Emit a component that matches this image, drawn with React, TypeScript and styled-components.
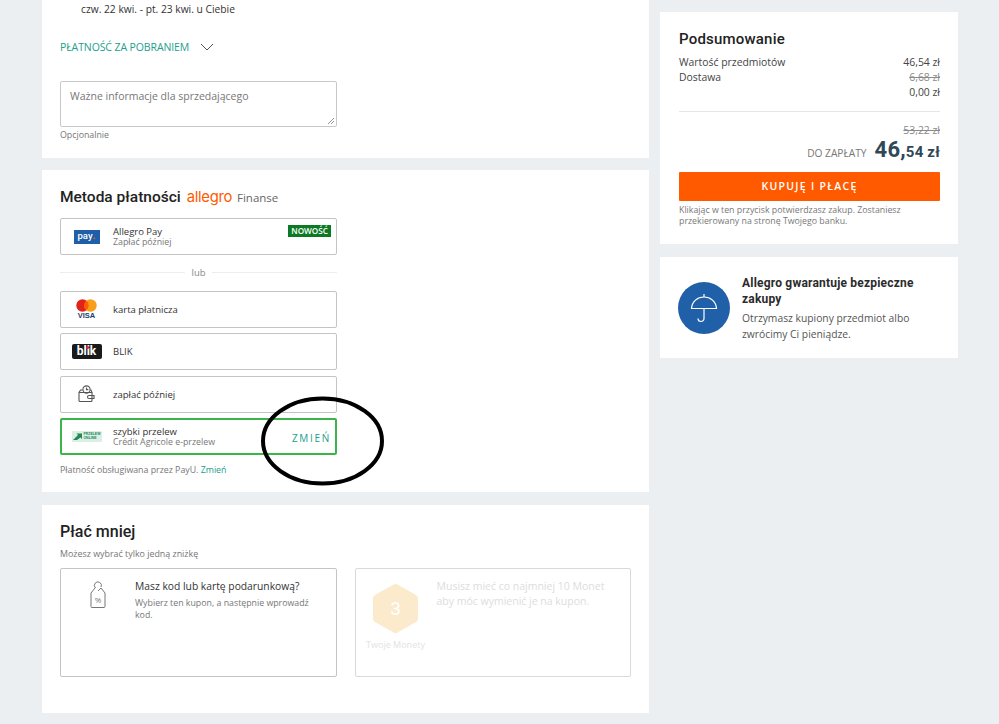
import styled, { createGlobalStyle } from "styled-components";

const GlobalStyle = createGlobalStyle`
    html, body {
        margin: 0;
        padding: 0;
        background: #eceff2;
        font-family: "Open Sans", "Liberation Sans", sans-serif;
        color: #333;
    }
`;

const Page = styled.div`
    position: relative;
    width: 999px;
    height: 724px;
    overflow: hidden;
    display: grid;
    grid-template-columns: 607px 298px;
    column-gap: 11px;
    padding-left: 42px;
    box-sizing: border-box;
    align-items: start;
`;

const Column = styled.div`
    display: flex;
    flex-direction: column;
`;

const RightColumn = styled(Column)`
    padding-top: 12px;
    gap: 13px;
`;

const Card = styled.section<{ $height: number; $gap?: number }>`
    background: #fff;
    box-sizing: border-box;
    height: ${(p) => p.$height}px;
    margin-bottom: ${(p) => p.$gap ?? 0}px;
    padding: 0 18px;
`;

const Delivery = styled.div`
    font-size: 10.25px;
    line-height: 14px;
    padding: 2px 0 0 21px;
    color: #333;
`;

const PayOnDelivery = styled.div`
    display: flex;
    align-items: center;
    gap: 11px;
    margin-top: 24px;
    height: 14px;
    font-size: 10.5px;
    color: #21a08d;
    letter-spacing: -0.1px;
`;

const NoteBox = styled.div`
    position: relative;
    box-sizing: border-box;
    width: 277px;
    height: 46px;
    margin-top: 27px;
    border: 1px solid #c9c9c9;
    border-radius: 2px;
    padding: 7px 9px;
    font-size: 10.5px;
    line-height: 14px;
    color: #777;
`;

const Grip = styled.svg`
    position: absolute;
    right: 1px;
    bottom: 1px;
`;

const Hint = styled.div`
    font-size: 8.8px;
    line-height: 12px;
    margin-top: 2px;
    color: #767676;
`;

const TitleRow = styled.div`
    display: flex;
    align-items: center;
    height: 22px;
    padding-top: 16px;
`;

const Title = styled.h2`
    margin: 0;
    font-family: Roboto, "Liberation Sans", sans-serif;
    font-size: 15.5px;
    font-weight: 500;
    color: #222;
`;

const AllegroWord = styled.span`
    font-family: Inter, "Liberation Sans", sans-serif;
    font-size: 14.8px;
    font-weight: 400;
    letter-spacing: -0.3px;
    color: #ff5a00;
    margin-left: 6px;
`;

const Finanse = styled.span`
    font-size: 11.5px;
    color: #666;
    margin-left: 5px;
`;

const OptionList = styled.div`
    display: flex;
    flex-direction: column;
    width: 277px;
    margin-top: 10px;
`;

const Option = styled.div<{ $selected?: boolean; $gap?: number }>`
    position: relative;
    box-sizing: border-box;
    display: flex;
    align-items: center;
    height: 37px;
    margin-bottom: ${(p) => p.$gap ?? 5.33}px;
    border: ${(p) => (p.$selected ? "2px solid #3ab54a" : "1px solid #c4c4c4")};
    border-radius: 2px;
    padding-left: ${(p) => (p.$selected ? 0 : 1)}px;
`;

const OptionIcon = styled.div`
    width: 49px;
    margin-right: 2px;
    flex: none;
    display: flex;
    justify-content: center;
    align-items: center;
`;

const OptionLines = styled.div`
    padding-top: 1px;
`;

const OptionText = styled.div`
    font-size: 9.5px;
    line-height: 11px;
    color: #333;
`;

const OptionSub = styled.div`
    font-size: 8.8px;
    line-height: 11px;
    color: #777;
`;

const NewBadge = styled.span`
    position: absolute;
    top: 6px;
    right: 5px;
    background: #0b7a22;
    color: #fff;
    font-size: 8.2px;
    font-weight: 600;
    line-height: 12px;
    padding: 0 3px;
`;

const Change = styled.span`
    position: absolute;
    right: 4px;
    top: 11px;
    font-size: 10px;
    line-height: 14px;
    letter-spacing: 1.7px;
    color: #21a08d;
`;

const Divider = styled.div`
    display: flex;
    align-items: center;
    gap: 6px;
    height: 13px;
    margin-bottom: 12px;
    font-size: 9.5px;
    color: #888;

    &::before,
    &::after {
        content: "";
        flex: 1;
        height: 1px;
        background: #eceff2;
    }
`;

const PayBadge = styled.div`
    width: 26px;
    height: 14px;
    background: #1f5ea8;
    color: #fff;
    font-family: Roboto, sans-serif;
    font-size: 9.5px;
    font-weight: 500;
    line-height: 12px;
    text-align: center;
`;

const PayDot = styled.span`
    color: #ff5a00;
    font-weight: 900;
`;

const BlikBadge = styled.div`
    position: relative;
    width: 30px;
    height: 15px;
    background: #1a1a1a;
    border-radius: 2px;
    color: #fff;
    font-family: Roboto, sans-serif;
    font-size: 12px;
    font-weight: 700;
    line-height: 14px;
    text-align: center;
`;

const BlikDot = styled.span`
    position: absolute;
    left: 14px;
    top: 2px;
    width: 3px;
    height: 3px;
    border-radius: 50%;
    background: #e8213a;
`;

const VisaStack = styled.div`
    display: flex;
    flex-direction: column;
    align-items: center;
`;

const VisaText = styled.span`
    font-family: "Liberation Sans", sans-serif;
    font-size: 7.5px;
    font-weight: 700;
    line-height: 8px;
    color: #1a3a6b;
`;

const OnlineBadge = styled.div`
    display: flex;
    align-items: center;
    justify-content: space-between;
    width: 30px;
    height: 11px;
    background: #dcefe6;
    border-radius: 1px;
    padding: 0 1px;
    box-sizing: border-box;
`;

const OnlineText = styled.span`
    color: #1e8a56;
    font-family: "Liberation Sans", sans-serif;
    font-size: 3.5px;
    font-weight: 700;
    line-height: 4px;
`;

const FooterNote = styled.div`
    font-size: 8.8px;
    line-height: 12px;
    margin-top: 9px;
    color: #767676;
`;

const TealLink = styled.span`
    color: #21a08d;
`;

const LessTitle = styled(Title)`
    font-size: 16px;
    line-height: 20px;
    padding-top: 17px;
`;

const LessSub = styled.div`
    font-size: 8.9px;
    line-height: 12px;
    margin-top: 6px;
    color: #767676;
`;

const CouponRow = styled.div`
    display: flex;
    gap: 18px;
    margin-top: 8px;
`;

const Coupon = styled.div<{ $width: number; $muted?: boolean }>`
    box-sizing: border-box;
    width: ${(p) => p.$width}px;
    height: 109px;
    display: flex;
    border: 1px solid ${(p) => (p.$muted ? "#d9d9d9" : "#c4c4c4")};
    border-radius: 2px;
`;

const CouponIcon = styled.div`
    width: 74px;
    flex: none;
    padding: 11px 0 0 0;
    display: flex;
    justify-content: center;
    align-items: flex-start;
    box-sizing: border-box;
`;

const CouponBody = styled.div`
    padding-top: 10px;
    width: 186px;
`;

const CouponTitle = styled.div`
    font-size: 10.3px;
    line-height: 15px;
    color: #333;
`;

const CouponText = styled.div`
    font-size: 8.8px;
    line-height: 11.5px;
    margin-top: 4px;
    color: #777;
`;

const CoinColumn = styled.div`
    width: 80px;
    flex: none;
    display: flex;
    flex-direction: column;
    align-items: center;
    padding-top: 14px;
    box-sizing: border-box;
`;

const Coin = styled.div`
    position: relative;
    width: 47px;
    height: 51px;
    display: flex;
    align-items: center;
    justify-content: center;
    color: #fff;
    font-family: Roboto, sans-serif;
    font-size: 19px;
`;

const CoinShape = styled.svg`
    position: absolute;
    inset: 0;
`;

const CoinDigit = styled.span`
    position: relative;
`;

const CoinLabel = styled.div`
    font-size: 9px;
    line-height: 12px;
    margin-top: 5px;
    color: #e3e3e3;
`;

const MutedText = styled.div`
    font-size: 10.5px;
    line-height: 15px;
    padding: 10px 0 0 1px;
    color: #dddddd;
    width: 180px;
`;

const SideCard = styled.section<{ $height: number }>`
    background: #fff;
    box-sizing: border-box;
    height: ${(p) => p.$height}px;
    padding: 0 18px 0 19px;
`;

const SummaryTitle = styled(Title)`
    font-size: 15px;
    line-height: 20px;
    padding-top: 17px;
    letter-spacing: 0.2px;
`;

const SummaryRows = styled.div`
    margin-top: 6px;
    padding-bottom: 11px;
    border-bottom: 1px solid #e4e6e8;
`;

const SummaryRow = styled.div`
    display: flex;
    justify-content: space-between;
    font-size: 10.4px;
    line-height: 15px;
    color: #444;
`;

const Struck = styled.span`
    text-decoration: line-through;
    color: #8a8a8a;
`;

const OldTotal = styled.div`
    font-size: 10.4px;
    line-height: 14px;
    text-align: right;
    margin-top: 11px;
`;

const TotalRow = styled.div`
    display: flex;
    justify-content: flex-end;
    align-items: baseline;
    gap: 8px;
    height: 24px;
`;

const TotalLabel = styled.span`
    font-size: 10.2px;
    color: #777;
`;

const TotalValue = styled.span`
    font-family: Roboto, sans-serif;
    font-weight: 700;
    font-size: 15px;
    color: #2f4858;
    letter-spacing: 0.2px;
`;

const TotalBig = styled.span`
    font-size: 22px;
`;

const BuyButton = styled.div`
    height: 29px;
    margin-top: 11px;
    background: #ff5a00;
    border-radius: 1px;
    color: #fff;
    font-size: 10.5px;
    font-weight: 600;
    line-height: 29px;
    letter-spacing: 1.3px;
    text-align: center;
`;

const Legal = styled.div`
    font-size: 8.8px;
    line-height: 11px;
    margin-top: 4px;
    color: #777;
`;

const Guarantee = styled.div`
    display: flex;
    gap: 12px;
    padding-top: 18px;
    margin-left: -1px;
`;

const UmbrellaCircle = styled.div`
    width: 52px;
    height: 52px;
    flex: none;
    margin-top: 7px;
    border-radius: 50%;
    background: #1f60a8;
    display: flex;
    align-items: center;
    justify-content: center;
`;

const GuaranteeTitle = styled.div`
    font-family: Roboto, sans-serif;
    font-size: 12px;
    font-weight: 700;
    line-height: 16px;
    color: #2b2b2b;
    letter-spacing: 0.2px;
`;

const GuaranteeText = styled.div`
    font-size: 10.3px;
    line-height: 15.5px;
    margin-top: 4px;
    color: #555;
`;

const Scribble = styled.svg`
    position: absolute;
    left: 258px;
    top: 394px;
`;

function App() {
    return (
        <>
            <GlobalStyle />
            <Page>
                <Column>
                    <Card $height={158} $gap={12}>
                        <Delivery>czw. 22 kwi. - pt. 23 kwi. u Ciebie</Delivery>
                        <PayOnDelivery>
                            PŁATNOŚĆ ZA POBRANIEM
                            <svg width="14" height="8" viewBox="0 0 14 8">
                                <path d="M1 1l6 6 6-6" fill="none" stroke="#555" strokeWidth="1" />
                            </svg>
                        </PayOnDelivery>
                        <NoteBox>
                            Ważne informacje dla sprzedającego
                            <Grip width="8" height="8" viewBox="0 0 8 8">
                                <path d="M1 7l6-6M4 7l3-3" stroke="#777" strokeWidth="0.8" />
                            </Grip>
                        </NoteBox>
                        <Hint>Opcjonalnie</Hint>
                    </Card>

                    <Card $height={322} $gap={13}>
                        <TitleRow>
                            <Title>Metoda płatności</Title>
                            <AllegroWord>allegro</AllegroWord>
                            <Finanse>Finanse</Finanse>
                        </TitleRow>
                        <OptionList>
                            <Option $gap={11}>
                                <OptionIcon>
                                    <PayBadge>pay<PayDot>.</PayDot></PayBadge>
                                </OptionIcon>
                                <OptionLines>
                                    <OptionText>Allegro Pay</OptionText>
                                    <OptionSub>Zapłać później</OptionSub>
                                </OptionLines>
                                <NewBadge>NOWOŚĆ</NewBadge>
                            </Option>
                            <Divider>lub</Divider>
                            <Option>
                                <OptionIcon>
                                    <VisaStack>
                                        <svg width="21" height="13" viewBox="0 0 21 13">
                                            <circle cx="6.5" cy="6.5" r="6.2" fill="#e2231a" />
                                            <circle cx="14.5" cy="6.5" r="6.2" fill="#f79e1b" />
                                            <path d="M10.5 1.8a6.2 6.2 0 0 1 0 9.4a6.2 6.2 0 0 1 0-9.4z" fill="#ff5f00" />
                                        </svg>
                                        <VisaText>VISA</VisaText>
                                    </VisaStack>
                                </OptionIcon>
                                <OptionText>karta płatnicza</OptionText>
                            </Option>
                            <Option>
                                <OptionIcon>
                                    <BlikBadge>
                                        blik
                                        <BlikDot />
                                    </BlikBadge>
                                </OptionIcon>
                                <OptionText>BLIK</OptionText>
                            </Option>
                            <Option>
                                <OptionIcon>
                                    <svg width="17" height="18" viewBox="0 0 17 18" fill="none" stroke="#555" strokeWidth="1.1">
                                        <circle cx="8.5" cy="4.5" r="3.6" />
                                        <path d="M8.5 2.600v2h1.800" />
                                        <path d="M4.800 5H2.600L1 7.500V15.500a1 1 0 0 0 1 1h11a1 1 0 0 0 1-1V7.500H1" />
                                        <path d="M12.200 5H13l1 2.500" />
                                        <path d="M16 10.500h-5a1.500 1.500 0 0 0 0 3h5z" />
                                    </svg>
                                </OptionIcon>
                                <OptionText>zapłać później</OptionText>
                            </Option>
                            <Option $selected $gap={0}>
                                <OptionIcon>
                                    <OnlineBadge>
                                        <svg width="9" height="8" viewBox="0 0 9 8">
                                            <path d="M0 8L5 3 3.500 1.500H9V7L7.500 5.500 4 8z" fill="#1e8a56" />
                                        </svg>
                                        <OnlineText>PRZELEW<br />ONLINE</OnlineText>
                                    </OnlineBadge>
                                </OptionIcon>
                                <OptionLines>
                                    <OptionText>szybki przelew</OptionText>
                                    <OptionSub>Crédit Agricole e-przelew</OptionSub>
                                </OptionLines>
                                <Change>ZMIEŃ</Change>
                            </Option>
                        </OptionList>
                        <FooterNote>
                            Płatność obsługiwana przez PayU. <TealLink>Zmień</TealLink>
                        </FooterNote>
                    </Card>

                    <Card $height={208}>
                        <LessTitle>Płać mniej</LessTitle>
                        <LessSub>Możesz wybrać tylko jedną zniżkę</LessSub>
                        <CouponRow>
                            <Coupon $width={277}>
                                <CouponIcon>
                                    <svg width="16" height="28" viewBox="0 0 16 28" fill="none" stroke="#777" strokeWidth="1">
                                        <path d="M5.500 8A3.500 3.500 0 1 1 11 7" />
                                        <path d="M5 8L1 13v13.500a1 1 0 0 0 1 1h12a1 1 0 0 0 1-1V13l-4-5-3 3" />
                                        <text x="8" y="23" fontSize="8" textAnchor="middle" fill="#777" stroke="none" fontFamily="Open Sans">%</text>
                                    </svg>
                                </CouponIcon>
                                <CouponBody>
                                    <CouponTitle>Masz kod lub kartę podarunkową?</CouponTitle>
                                    <CouponText>Wybierz ten kupon, a następnie wprowadź kod.</CouponText>
                                </CouponBody>
                            </Coupon>
                            <Coupon $width={277} $muted>
                                <CoinColumn>
                                    <Coin>
                                        <CoinShape width="47" height="51" viewBox="0 0 47 51">
                                            <path d="M23.500 5L42 15.500v20L23.500 46 5 35.500v-20z" fill="#fbeacb" stroke="#fbeacb" strokeWidth="8" strokeLinejoin="round" />
                                        </CoinShape>
                                        <CoinDigit>3</CoinDigit>
                                    </Coin>
                                    <CoinLabel>Twoje Monety</CoinLabel>
                                </CoinColumn>
                                <MutedText>Musisz mieć co najmniej 10 Monet aby móc wymienić je na kupon.</MutedText>
                            </Coupon>
                        </CouponRow>
                    </Card>
                </Column>

                <RightColumn>
                    <SideCard $height={232}>
                        <SummaryTitle>Podsumowanie</SummaryTitle>
                        <SummaryRows>
                            <SummaryRow>
                                <span>Wartość przedmiotów</span>
                                <span>46,54 zł</span>
                            </SummaryRow>
                            <SummaryRow>
                                <span>Dostawa</span>
                                <Struck>6,68 zł</Struck>
                            </SummaryRow>
                            <SummaryRow>
                                <span />
                                <span>0,00 zł</span>
                            </SummaryRow>
                        </SummaryRows>
                        <OldTotal>
                            <Struck>53,22 zł</Struck>
                        </OldTotal>
                        <TotalRow>
                            <TotalLabel>DO ZAPŁATY</TotalLabel>
                            <TotalValue>
                                <TotalBig>46,</TotalBig>54 zł
                            </TotalValue>
                        </TotalRow>
                        <BuyButton>KUPUJĘ I PŁACĘ</BuyButton>
                        <Legal>Klikając w ten przycisk potwierdzasz zakup. Zostaniesz przekierowany na stronę Twojego banku.</Legal>
                    </SideCard>

                    <SideCard $height={101}>
                        <Guarantee>
                            <UmbrellaCircle>
                                <svg width="28" height="30" viewBox="0 0 28 30" fill="none" stroke="#fff" strokeWidth="1.2">
                                    <path d="M14 1v3" />
                                    <path d="M1.500 15.500C2 8.500 7.500 4 14 4s12 4.500 12.500 11.500z" />
                                    <path d="M14 15.500v10a3 3 0 0 1-6 0" />
                                </svg>
                            </UmbrellaCircle>
                            <div>
                                <GuaranteeTitle>Allegro gwarantuje bezpieczne zakupy</GuaranteeTitle>
                                <GuaranteeText>Otrzymasz kupiony przedmiot albo zwrócimy Ci pieniądze.</GuaranteeText>
                            </div>
                        </Guarantee>
                    </SideCard>
                </RightColumn>

                <Scribble width="130" height="94" viewBox="0 0 130 94">
                    <ellipse cx="64.500" cy="47" rx="59.500" ry="42.500" fill="none" stroke="#000" strokeWidth="4" />
                </Scribble>
            </Page>
        </>
    );
}

export default App;
